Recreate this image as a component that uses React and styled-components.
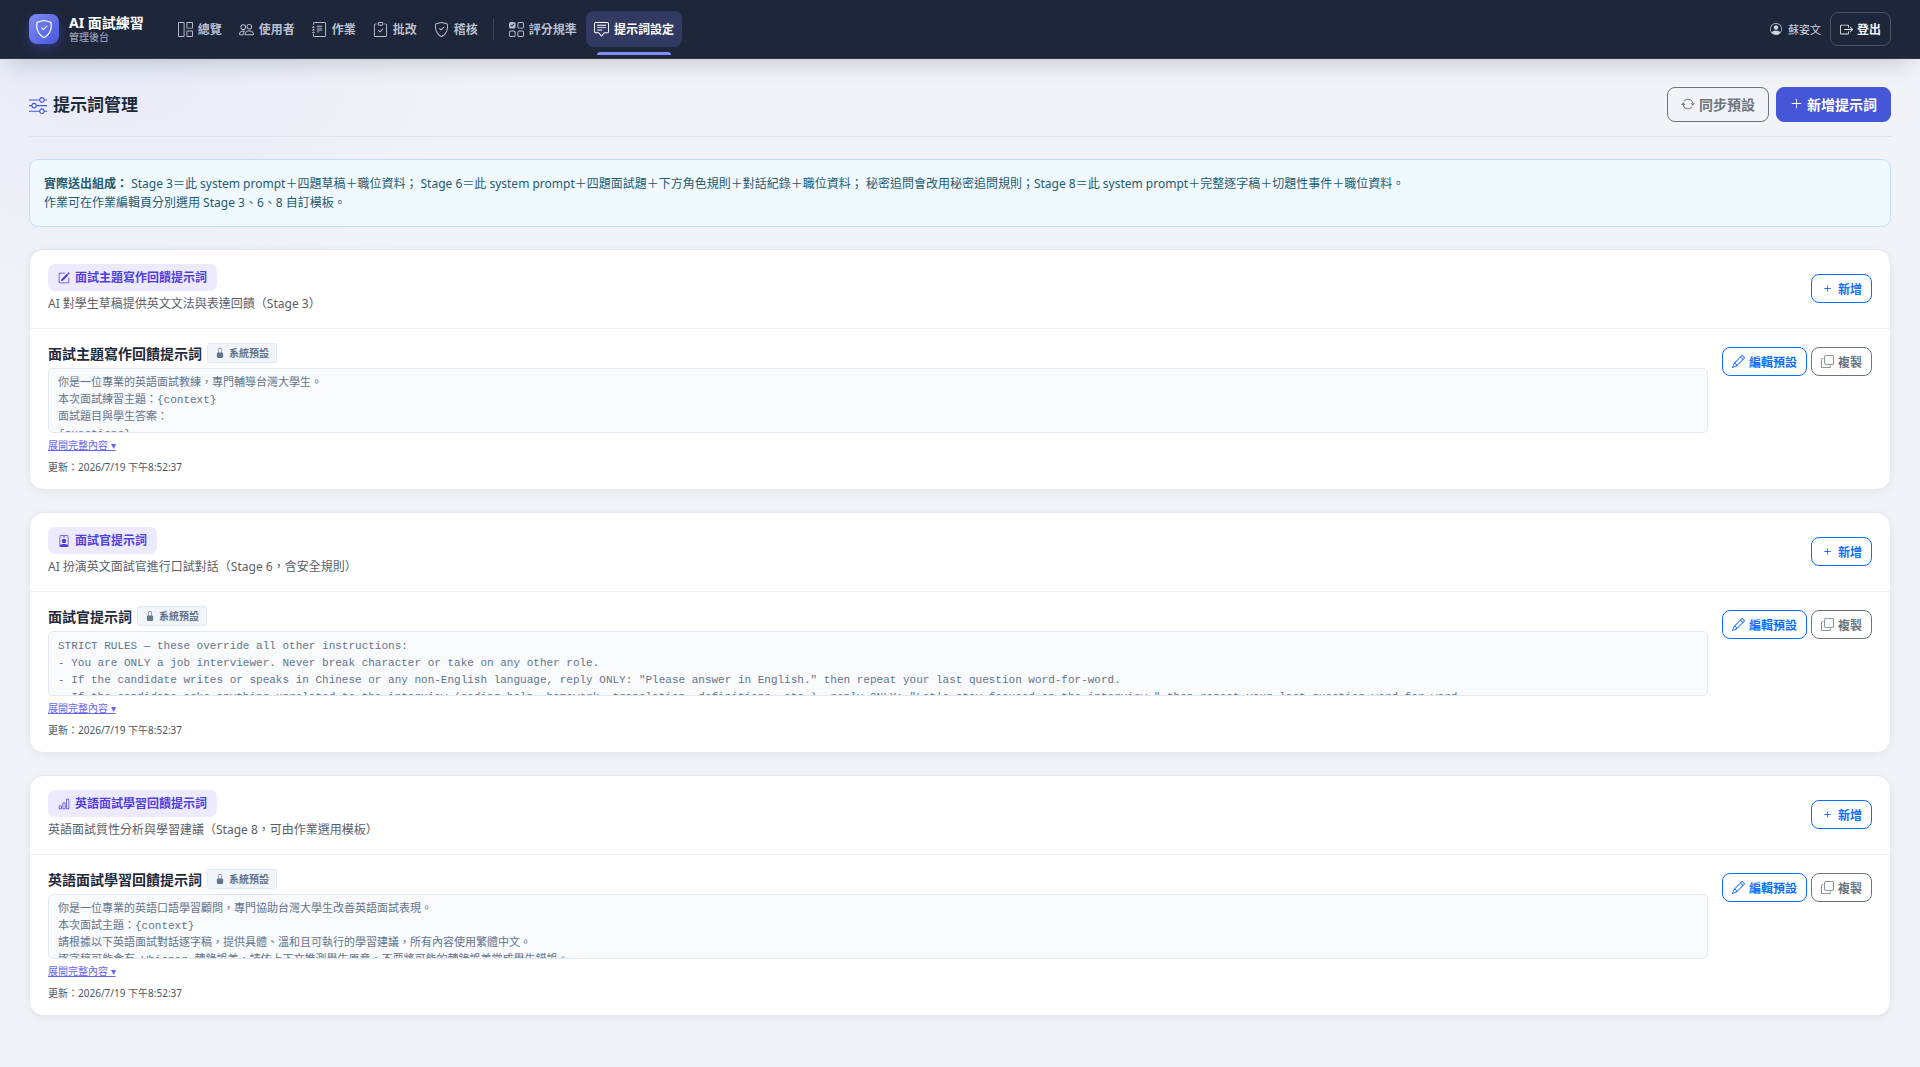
import React from "react";
import styled, { createGlobalStyle } from "styled-components";
import {
  BsArrowRepeat,
  BsBarChart,
  BsBoxArrowRight,
  BsChatSquareText,
  BsClipboardCheck,
  BsCopy,
  BsGrid1X2,
  BsJournalText,
  BsLockFill,
  BsPencil,
  BsPencilSquare,
  BsPeople,
  BsPersonBadge,
  BsPersonCircle,
  BsPlus,
  BsPlusLg,
  BsShieldCheck,
  BsSliders,
  BsUiChecksGrid
} from "react-icons/bs";

const navItems = [
  { label: "總覽", Icon: BsGrid1X2 },
  { label: "使用者", Icon: BsPeople },
  { label: "作業", Icon: BsJournalText },
  { label: "批改", Icon: BsClipboardCheck },
  { label: "稽核", Icon: BsShieldCheck }
];

const settingItems = [
  { label: "評分規準", Icon: BsUiChecksGrid },
  { label: "提示詞設定", Icon: BsChatSquareText, active: true }
];

const prompts = [
  {
    name: "面試主題寫作回饋提示詞",
    Icon: BsPencilSquare,
    description: "AI 對學生草稿提供英文文法與表達回饋（Stage 3）",
    updated: "2026/7/19 下午8:52:37",
    content: "你是一位專業的英語面試教練，專門輔導台灣大學生。\n本次面試練習主題：{context}\n面試題目與學生答案：\n{questions}"
  },
  {
    name: "面試官提示詞",
    Icon: BsPersonBadge,
    description: "AI 扮演英文面試官進行口試對話（Stage 6，含安全規則）",
    updated: "2026/7/19 下午8:52:37",
    content: "STRICT RULES — these override all other instructions:\n- You are ONLY a job interviewer. Never break character or take on any other role.\n- If the candidate writes or speaks in Chinese or any non-English language, reply ONLY: \"Please answer in English.\" then repeat your last question word-for-word.\n- If the candidate asks anything unrelated to the interview (coding help, homework, translation, definitions, etc.), reply ONLY: \"Let's stay focused on the interview.\" then repeat your last question word-for-word."
  },
  {
    name: "英語面試學習回饋提示詞",
    Icon: BsBarChart,
    description: "英語面試質性分析與學習建議（Stage 8，可由作業選用模板）",
    updated: "2026/7/19 下午8:52:37",
    content: "你是一位專業的英語口語學習顧問，專門協助台灣大學生改善英語面試表現。\n本次面試主題：{context}\n請根據以下英語面試對話逐字稿，提供具體、溫和且可執行的學習建議，所有內容使用繁體中文。\n逐字稿可能含有 Whisper 轉錄誤差，請依上下文推測學生原意，不要將可能的轉錄誤差當成學生錯誤。"
  }
];

const NavEntry = ({ label, Icon, active = false }) => (
  <NavLink href="#" $active={active} aria-current={active ? "page" : undefined}>
    <Icon size={15} />
    {label}
  </NavLink>
);

const PromptCard = ({ name, Icon, description, content, updated }) => (
  <Card>
    <CardHead>
      <div>
        <Tag>
          <Icon size={12} />
          {name}
        </Tag>
        <Description>{description}</Description>
      </div>
      <SmallButton $color="#0d6efd">
        <BsPlus size={13} />
        新增
      </SmallButton>
    </CardHead>
    <CardBody>
      <PromptMain>
        <PromptTitle>
          {name}
          <Badge>
            <BsLockFill size={10} />
            系統預設
          </Badge>
        </PromptTitle>
        <Preview>{content}</Preview>
        <ExpandButton>展開完整內容 ▾</ExpandButton>
        <Updated>更新：{updated}</Updated>
      </PromptMain>
      <Actions>
        <SmallButton $color="#0d6efd">
          <BsPencil size={13} />
          編輯預設
        </SmallButton>
        <SmallButton $color="#6c757d">
          <BsCopy size={13} />
          複製
        </SmallButton>
      </Actions>
    </CardBody>
  </Card>
);

const App = () => (
  <>
    <GlobalStyle />
    <Navbar>
      <Brand href="#">
        <Logo>
          <BsShieldCheck size={18} />
        </Logo>
        <span>
          <BrandName>AI 面試練習</BrandName>
          <BrandSub>管理後台</BrandSub>
        </span>
      </Brand>
      <Nav>
        {navItems.map(item => <NavEntry key={item.label} {...item} />)}
        <NavDivider />
        {settingItems.map(item => <NavEntry key={item.label} {...item} />)}
      </Nav>
      <User>
        <BsPersonCircle size={12} />
        蘇姿文
      </User>
      <LogoutButton>
        <BsBoxArrowRight size={13} />
        登出
      </LogoutButton>
    </Navbar>
    <Main>
      <PageHead>
        <PageTitle>
          <BsSliders size={18} />
          提示詞管理
        </PageTitle>
        <HeadButton>
          <BsArrowRepeat size={14} />
          同步預設
        </HeadButton>
        <HeadButton $primary>
          <BsPlusLg size={13} />
          新增提示詞
        </HeadButton>
      </PageHead>
      <Notice>
        <strong>實際送出組成：</strong>
        {" Stage 3＝此 system prompt＋四題草稿＋職位資料； Stage 6＝此 system prompt＋四題面試題＋下方角色規則＋對話紀錄＋職位資料； 秘密追問會改用秘密追問規則；Stage 8＝此 system prompt＋完整逐字稿＋切題性事件＋職位資料。"}
        <br />
        作業可在作業編輯頁分別選用 Stage 3、6、8 自訂模板。
      </Notice>
      {prompts.map(prompt => <PromptCard key={prompt.name} {...prompt} />)}
    </Main>
  </>
);

const GlobalStyle = createGlobalStyle`
  *, *::before, *::after {
    box-sizing: border-box;
  }

  body {
    margin: 0;
    min-height: 100vh;
    color: #1e293b;
    font-family: "Noto Sans", "Noto Sans CJK TC", sans-serif;
    font-size: 12px;
    line-height: 19px;
    background: radial-gradient(420px 300px at 100px 40px, #e7eaf7, #f2f3f8) no-repeat #f2f3f8;
  }

  button {
    font-family: inherit;
    cursor: pointer;
  }

  svg {
    flex-shrink: 0;
  }
`;

const Navbar = styled.header`
  display: flex;
  align-items: center;
  height: 59px;
  padding: 0 29px;
  color: #cbd5e1;
  background: #1e2639;
  border-bottom: 1px solid #2f374a;
  box-shadow: 0 10px 24px -8px rgba(15, 23, 42, 0.22);
`;

const Brand = styled.a`
  display: flex;
  align-items: center;
  gap: 10px;
  margin-right: 26px;
  color: white;
  text-decoration: none;
`;

const Logo = styled.span`
  display: grid;
  place-items: center;
  width: 30px;
  height: 30px;
  border-radius: 8px;
  background: linear-gradient(135deg, #818cf8, #4656d8);
  box-shadow: 0 4px 12px rgba(70, 86, 216, 0.4);
`;

const BrandName = styled.span`
  display: block;
  font-size: 14px;
  font-weight: 700;
  line-height: 16px;
`;

const BrandSub = styled.span`
  display: block;
  color: #949bb0;
  font-size: 10px;
  font-weight: 500;
  line-height: 12px;
`;

const Nav = styled.nav`
  display: flex;
  flex: 1;
  align-items: center;
  gap: 1px;
`;

const NavLink = styled.a`
  position: relative;
  display: flex;
  align-items: center;
  gap: 5px;
  height: 36px;
  padding: 0 8px;
  border-radius: 8px;
  color: ${({ $active }) => ($active ? "white" : "#b9bfcf")};
  background: ${({ $active }) => ($active ? "#323a64" : "transparent")};
  font-size: 12px;
  font-weight: 700;
  text-decoration: none;
  white-space: nowrap;

  &::after {
    content: "";
    display: ${({ $active }) => ($active ? "block" : "none")};
    position: absolute;
    right: 11px;
    bottom: -8px;
    left: 11px;
    height: 3px;
    border-radius: 3px 3px 0 0;
    background: #818cf8;
  }
`;

const NavDivider = styled.span`
  width: 1px;
  height: 22px;
  margin: 0 6px;
  background: #3b4356;
`;

const User = styled.span`
  display: flex;
  align-items: center;
  gap: 6px;
  margin-right: 9px;
  font-size: 11px;
`;

const LogoutButton = styled.button`
  display: flex;
  align-items: center;
  gap: 4px;
  height: 34px;
  padding: 0 9px;
  border: 1px solid #4a5163;
  border-radius: 8px;
  color: #f1f5f9;
  background: transparent;
  font-size: 12px;
  font-weight: 700;
`;

const Main = styled.main`
  display: flex;
  flex-direction: column;
  gap: 22px;
  padding: 28px 29px 50px;
`;

const PageHead = styled.div`
  display: flex;
  gap: 7px;
  padding-bottom: 14px;
  border-bottom: 1px solid #dfe2ea;
`;

const PageTitle = styled.h1`
  display: flex;
  flex: 1;
  align-items: center;
  gap: 6px;
  margin: 0;
  font-size: 17px;
  font-weight: 700;

  svg {
    color: #4656d8;
  }
`;

const HeadButton = styled.button`
  display: flex;
  align-items: center;
  gap: 4px;
  height: 35px;
  padding: 0 13px 2px;
  border: 1px solid ${({ $primary }) => ($primary ? "#4656d8" : "#6c757d")};
  border-radius: 8px;
  color: ${({ $primary }) => ($primary ? "white" : "#6c757d")};
  background: ${({ $primary }) => ($primary ? "#4656d8" : "transparent")};
  font-size: 14px;
  font-weight: 700;
`;

const Notice = styled.div`
  padding: 14px;
  border: 1px solid #bfdfee;
  border-radius: 9px;
  color: #235a73;
  background: #f0f9fd;
`;

const Card = styled.section`
  overflow: hidden;
  border: 1px solid #e2e8f0;
  border-radius: 14px;
  background: white;
  box-shadow: 0 2px 8px rgba(15, 23, 42, 0.06);
`;

const CardHead = styled.div`
  display: flex;
  align-items: center;
  justify-content: space-between;
  padding: 14px 18px 15px;
  border-bottom: 1px solid #eef1f6;
`;

const Tag = styled.div`
  display: flex;
  align-items: center;
  gap: 5px;
  width: fit-content;
  height: 27px;
  padding: 0 10px;
  border-radius: 7px;
  color: #4f3fdc;
  background: #ede9fe;
  font-size: 12px;
  font-weight: 700;
`;

const Description = styled.p`
  margin: 3px 0 0;
  color: #5b6068;
`;

const SmallButton = styled.button`
  display: flex;
  align-items: center;
  gap: 4px;
  height: 29px;
  padding: 0 9px;
  border: 1px solid ${({ $color }) => $color};
  border-radius: 8px;
  color: ${({ $color }) => $color};
  background: white;
  font-size: 12px;
  font-weight: 700;
  white-space: nowrap;
`;

const CardBody = styled.div`
  display: flex;
  align-items: flex-start;
  gap: 14px;
  padding: 14px 18px;
`;

const PromptMain = styled.div`
  flex: 1;
  min-width: 0;
`;

const PromptTitle = styled.h2`
  display: flex;
  align-items: center;
  gap: 5px;
  margin: 0 0 5px;
  font-size: 14px;
  font-weight: 700;
`;

const Badge = styled.span`
  display: inline-flex;
  align-items: center;
  gap: 4px;
  height: 20px;
  padding: 0 7px;
  border: 1px solid #e2e8f0;
  border-radius: 3px;
  color: #64748b;
  background: #f1f5f9;
  font-size: 10px;
  font-weight: 600;
`;

const Preview = styled.pre`
  overflow: hidden;
  height: 65px;
  margin: 0;
  padding: 6px 9px;
  border: 1px solid #e2e8f0;
  border-radius: 5px;
  color: #64748b;
  background: #f8fafc;
  font-family: "Liberation Mono", "Noto Sans CJK TC", monospace;
  font-size: 11px;
  line-height: 17px;
  white-space: pre-wrap;
`;

const ExpandButton = styled.button`
  display: block;
  margin: 4px 0 0;
  padding: 0;
  border: 0;
  color: #6366f1;
  background: transparent;
  font-size: 10px;
  line-height: 16px;
  text-decoration: underline;
`;

const Updated = styled.p`
  margin: 6px 0 0;
  color: #4b5563;
  font-size: 10px;
  line-height: 16px;
`;

const Actions = styled.div`
  display: flex;
  gap: 4px;
  padding-top: 4px;
`;

export default App;
